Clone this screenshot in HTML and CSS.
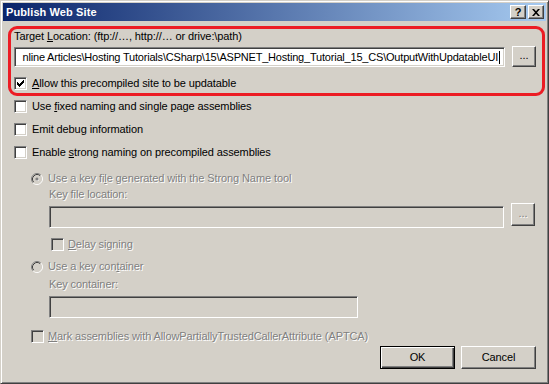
FILE: index.html
```html
<!DOCTYPE html>
<html>
<head>
<meta charset="utf-8">
<link rel="stylesheet" href="styles.css">
</head>
<body>
<div class="window">
  <div class="titlebar">
    <span class="title">Publish Web Site</span>
    <div class="tbtns">
      <span class="tbtn help">?</span>
      <span class="tbtn close"><svg width="8" height="7" viewBox="0 0 8 7"><path d="M0 0h2l2 2.2L6 0h2L5 3.5 8 7H6L4 4.8 2 7H0l3-3.5z" fill="#000"/></svg></span>
    </div>
  </div>
  <div class="client">
    <div class="highlight">
      <div class="lbl">Target <u>L</u>ocation: (ftp://…, http://… or drive:\path)</div>
      <div class="pathrow">
        <div class="field path"><span class="val">nline Articles\Hosting Tutorials\CSharp\15\ASPNET_Hosting_Tutorial_15_CS\OutputWithUpdatableUI</span><span class="caret"></span></div>
        <div class="btn browse">...</div>
      </div>
      <div class="check allow"><span class="box"><svg width="7" height="7" viewBox="0 0 7 7"><path d="M6 0h1v3H6v1H5v1H4v1H3v1H2V6H1V5H0V2h1v1h1v1h1V3h1V2h1V1h1z" fill="#000"/></svg></span><span><u>A</u>llow this precompiled site to be updatable</span></div>
    </div>
    <div class="check opt first"><span class="box"></span><span>Use <u>f</u>ixed naming and single page assemblies</span></div>
    <div class="check opt"><span class="box"></span><span>Emit debu<u>g</u> information</span></div>
    <div class="check opt"><span class="box"></span><span>Enable <u>s</u>trong naming on precompiled assemblies</span></div>

    <div class="group">
      <div class="radio r1 dis"><svg class="rb" width="12" height="12" viewBox="0 0 12 12"><circle cx="6" cy="6" r="4.2" fill="#d4d0c8"/><path d="M2.11 9.89A5.5 5.5 0 0 1 9.89 2.11" stroke="#808080" fill="none"/><path d="M9.89 2.11A5.5 5.5 0 0 1 2.11 9.89" stroke="#fff" fill="none"/><path d="M2.82 9.18A4.5 4.5 0 0 1 9.18 2.82" stroke="#404040" fill="none"/><path d="M9.18 2.82A4.5 4.5 0 0 1 2.82 9.18" stroke="#d4d0c8" fill="none"/><circle cx="6.5" cy="6.5" r="1.6" fill="#fff"/><circle cx="6" cy="6" r="1.6" fill="#808080"/></svg><span>Use a key fi<u>l</u>e generated with the Strong Name tool</span></div>
      <div class="sub lbl2 dis">Key file location:</div>
      <div class="sub keyrow">
        <div class="field disfield keyfile"></div>
        <div class="btn browse disbtn">...</div>
      </div>
      <div class="sub check delay dis"><span class="box disbox"></span><span><u>D</u>elay signing</span></div>
      <div class="radio r2 dis"><svg class="rb" width="12" height="12" viewBox="0 0 12 12"><circle cx="6" cy="6" r="4.2" fill="#d4d0c8"/><path d="M2.11 9.89A5.5 5.5 0 0 1 9.89 2.11" stroke="#808080" fill="none"/><path d="M9.89 2.11A5.5 5.5 0 0 1 2.11 9.89" stroke="#fff" fill="none"/><path d="M2.82 9.18A4.5 4.5 0 0 1 9.18 2.82" stroke="#404040" fill="none"/><path d="M9.18 2.82A4.5 4.5 0 0 1 2.82 9.18" stroke="#d4d0c8" fill="none"/></svg><span>Use a key con<u>t</u>ainer</span></div>
      <div class="sub lbl3 dis">Key container:</div>
      <div class="sub field disfield keycont"></div>
      <div class="check mark dis"><span class="box disbox"></span><span><u>M</u>ark assemblies with AllowPartiallyTrustedCallerAttribute (APTCA)</span></div>
    </div>

    <div class="actions">
      <div class="btn push default">OK</div>
      <div class="btn push">Cancel</div>
    </div>
  </div>
</div>
</body>
</html>
```

FILE: styles.css
```css
* { box-sizing: border-box; }
html, body { margin: 0; padding: 0; }
body {
  width: 549px;
  height: 384px;
  overflow: hidden;
  font-family: "Liberation Sans", Arial, sans-serif;
  font-size: 11px;
  letter-spacing: -0.1px;
  color: #000;
  background: #d4d0c8;
}
u { text-decoration: underline; text-underline-offset: 1px; }

.window {
  width: 549px;
  height: 384px;
  background: #d4d0c8;
  border: 1px solid;
  border-color: #d4d0c8 #404040 #404040 #d4d0c8;
  box-shadow: inset 1px 1px 0 #fff, inset -1px -1px 0 #808080;
  padding: 2px;
  display: flex;
  flex-direction: column;
}

.titlebar {
  height: 18px;
  flex: none;
  background: linear-gradient(to right, #0a246a, #a6caf0);
  display: flex;
  align-items: center;
  justify-content: space-between;
  padding: 0 2px 0 3px;
}
.title {
  color: #fff;
  font-weight: bold;
  font-size: 11px;
  letter-spacing: 0.1px;
  line-height: 13px;
}
.tbtns { display: flex; gap: 2px; }
.tbtn {
  width: 16px;
  height: 14px;
  background: #d4d0c8;
  border: 1px solid;
  border-color: #fff #404040 #404040 #fff;
  box-shadow: inset -1px -1px 0 #808080;
  display: flex;
  align-items: center;
  justify-content: center;
  font-weight: bold;
  font-size: 11px;
  line-height: 12px;
}

.client {
  flex: 1;
  padding: 5px 1px 0 5px;
  display: flex;
  flex-direction: column;
}

.highlight {
  height: 70px;
  border: 3px solid #ec1c24;
  border-radius: 9px;
  padding: 1px 6px 0 3px;
  display: flex;
  flex-direction: column;
}
.lbl { line-height: 13px; height: 13px; white-space: nowrap; }

.pathrow {
  margin-top: 3px;
  display: flex;
  align-items: flex-end;
  gap: 7px;
  height: 21px;
}

.field {
  background: #fff;
  border: 1px solid;
  border-color: #808080 #fff #fff #808080;
  box-shadow: inset 1px 1px 0 #404040, inset -1px -1px 0 #d4d0c8;
}
.path {
  width: 491px;
  height: 20px;
  display: flex;
  justify-content: flex-end;
  align-items: center;
  overflow: hidden;
  white-space: nowrap;
  padding: 0 4px 0 3px;
  line-height: 13px;
}
.val { flex: none; letter-spacing: -0.2px; }
.caret {
  flex: none;
  width: 1px;
  height: 13px;
  background: #000;
  margin-left: 1px;
}

.btn {
  background: #d4d0c8;
  border: 1px solid;
  border-color: #fff #404040 #404040 #fff;
  box-shadow: inset -1px -1px 0 #808080;
  display: flex;
  align-items: center;
  justify-content: center;
  line-height: 13px;
}
.browse { width: 24px; height: 21px; padding-bottom: 2px; }

.check {
  display: flex;
  align-items: center;
  gap: 5px;
  height: 13px;
  line-height: 13px;
  white-space: nowrap;
}
.box {
  flex: none;
  width: 13px;
  height: 13px;
  background: #fff;
  border: 1px solid;
  border-color: #808080 #fff #fff #808080;
  box-shadow: inset 1px 1px 0 #404040, inset -1px -1px 0 #d4d0c8;
  display: flex;
  align-items: center;
  justify-content: center;
}
.disbox { background: #d4d0c8; }

.allow { margin-top: 10px; }
.opt { margin-left: 6px; margin-top: 10px; }
.opt.first { margin-top: 4px; }

.dis { color: #808080; text-shadow: 1px 1px 0 #fff; }
.dis u { text-decoration-color: #808080; }

.group {
  margin-left: 23px;
  display: flex;
  flex-direction: column;
}
.radio {
  display: flex;
  align-items: center;
  gap: 5px;
  height: 13px;
  line-height: 13px;
  white-space: nowrap;
}
.rb { flex: none; }
.r1 { margin-top: 13px; }
.sub { margin-left: 18px; }
.lbl2, .lbl3 { height: 13px; line-height: 13px; }
.lbl2 { margin-top: 3px; }

.keyrow {
  margin-top: 2px;
  display: flex;
  align-items: flex-start;
  gap: 7px;
  height: 25px;
}
.disfield { background: #d4d0c8; }
.keyfile { width: 455px; height: 22px; margin-top: 3px; }
.disbtn { height: 23px; color: #808080; text-shadow: 1px 1px 0 #fff; }

.delay { margin-top: 10px; margin-left: 20px; gap: 4px; }
.r2 { margin-top: 9px; }
.lbl3 { margin-top: 5px; }
.keycont { width: 309px; height: 22px; margin-top: 5px; }
.mark { margin-top: 12px; gap: 4px; }

.actions {
  margin-top: 3px;
  display: flex;
  justify-content: flex-end;
  gap: 6px;
  padding-right: 9px;
}
.push { width: 75px; height: 23px; }
.default {
  border: 1px solid #000;
  box-shadow: inset 1px 1px 0 #fff, inset -1px -1px 0 #404040, inset -2px -2px 0 #808080;
}
```
